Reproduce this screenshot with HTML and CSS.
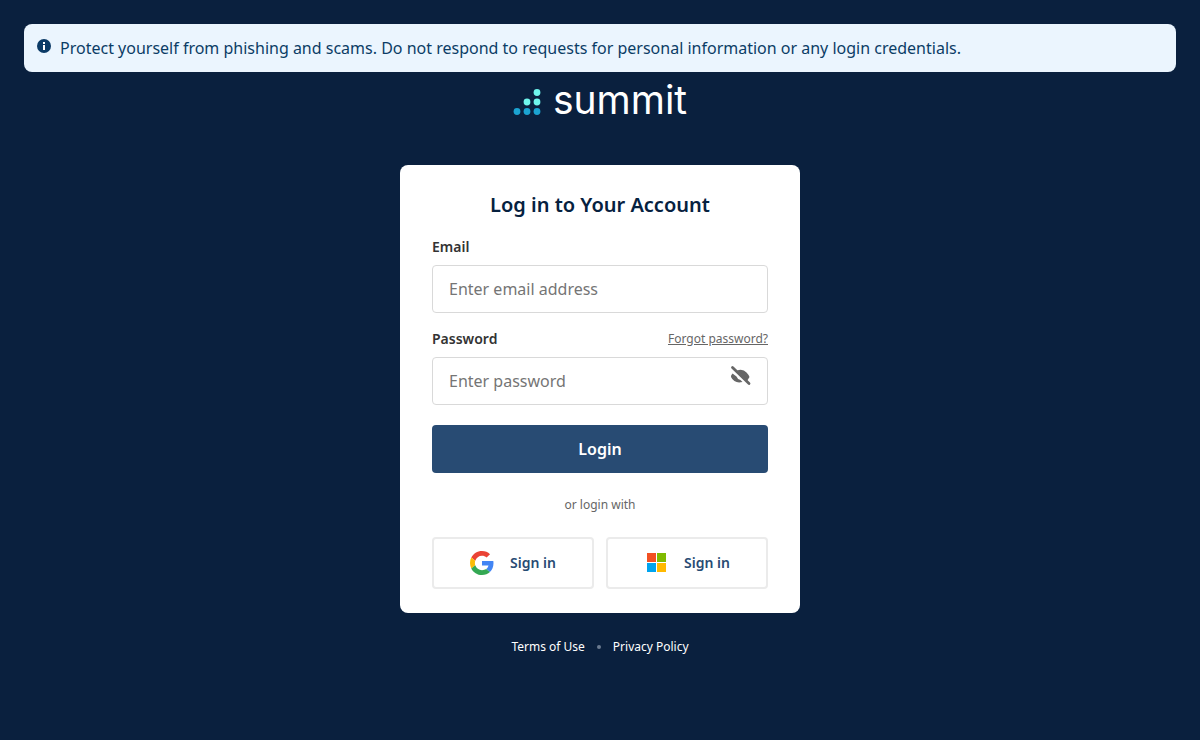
FILE: index.html
```html
<!DOCTYPE html>
<html lang="en">
<head>
<meta charset="utf-8">
<meta name="viewport" content="width=device-width, initial-scale=1">
<title>Summit – Log in</title>
<link rel="stylesheet" href="styles.css">
</head>
<body class="page">
  <div class="notice" role="status">
    <svg class="notice-icon" viewBox="0 0 14 14" aria-hidden="true">
      <circle cx="7" cy="7" r="7" fill="#0b3a66"/>
      <path d="M6 3h2v2H6zM6 6h2v5H6z" fill="#fff"/>
    </svg>
    <span>Protect yourself from phishing and scams. Do not respond to requests for personal information or any login credentials.</span>
  </div>

  <header class="brand">
    <svg class="brand-mark" viewBox="0 0 28 28" aria-hidden="true">
      <g fill="#1ba3d1"><circle cx="4" cy="23.500" r="3.400"/><circle cx="14" cy="23.500" r="3.400"/><circle cx="24" cy="23.500" r="3.400"/></g>
      <g fill="#6ff5ec"><circle cx="14" cy="14" r="3.400"/><circle cx="24" cy="14" r="3.400"/><circle cx="24" cy="4.500" r="3.400"/></g>
    </svg>
    <span class="brand-name">summit</span>
  </header>

  <main class="card">
    <h1 class="title">Log in to Your Account</h1>
    <form>
      <div class="field">
        <div class="label-row"><label for="email">Email</label></div>
        <input class="input" id="email" type="email" placeholder="Enter email address">
      </div>
      <div class="field">
        <div class="label-row">
          <label for="password">Password</label>
          <a class="forgot" href="#">Forgot password?</a>
        </div>
        <div class="password">
          <input class="input" id="password" type="password" placeholder="Enter password">
          <button class="toggle" type="button" aria-label="Show password">
            <svg viewBox="0 0 24 24" aria-hidden="true">
              <path d="M9 6.500Q15 4.500 18.500 8.500Q20.500 10.500 21.500 13L19 17ZM4.500 9.500Q2.500 11.500 3 13Q6.500 20 14.500 18L12.500 16Q9.500 15.500 8.500 12.500Z" fill="#666"/>
              <path d="M4.500 3.500L21 19.500" stroke="#666" stroke-width="2.800" stroke-linecap="round"/>
            </svg>
          </button>
        </div>
      </div>
      <button class="login" type="submit">Login</button>
    </form>
    <p class="divider">or login with</p>
    <div class="providers">
      <button class="provider" type="button" aria-label="Sign in with Google">
        <svg viewBox="0 0 48 48" aria-hidden="true">
          <path fill="#EA4335" d="M24 9.500c3.540 0 6.710 1.220 9.210 3.600l6.850-6.850C35.900 2.380 30.470 0 24 0 14.620 0 6.510 5.380 2.560 13.220l7.980 6.190C12.430 13.720 17.740 9.500 24 9.500z"/>
          <path fill="#4285F4" d="M46.980 24.550c0-1.570-.15-3.090-.38-4.550H24v9.020h12.940c-.58 2.960-2.260 5.480-4.780 7.180l7.730 6c4.510-4.180 7.090-10.360 7.090-17.650z"/>
          <path fill="#FBBC05" d="M10.530 28.590c-.48-1.450-.76-2.990-.76-4.590s.27-3.140.76-4.590l-7.980-6.190C.92 16.460 0 20.120 0 24c0 3.880.92 7.540 2.560 10.780l7.970-6.190z"/>
          <path fill="#34A853" d="M24 48c6.480 0 11.930-2.130 15.890-5.810l-7.730-6c-2.150 1.450-4.920 2.300-8.160 2.300-6.260 0-11.570-4.220-13.470-9.910l-7.980 6.190C6.510 42.620 14.620 48 24 48z"/>
        </svg>
        <span>Sign in</span>
      </button>
      <button class="provider" type="button" aria-label="Sign in with Microsoft">
        <svg viewBox="0 0 24 24" aria-hidden="true">
          <path fill="#F25022" d="M3 2h9v9H3z"/>
          <path fill="#7FBA00" d="M13 2h9v9h-9z"/>
          <path fill="#00A4EF" d="M3 12h9v9H3z"/>
          <path fill="#FFB900" d="M13 12h9v9h-9z"/>
        </svg>
        <span>Sign in</span>
      </button>
    </div>
  </main>

  <footer class="footer">
    <a href="#">Terms of Use</a>
    <span class="dot"></span>
    <a href="#">Privacy Policy</a>
  </footer>
</body>
</html>
```
FILE: styles.css
```css
* { box-sizing: border-box; }

.page {
  margin: 0;
  min-height: 100vh;
  padding: 24px;
  display: flex;
  flex-direction: column;
  align-items: center;
  background: #0a203e;
  font-family: "Noto Sans", "Open Sans", sans-serif;
}

.page button, .page input { font-family: inherit; }

.notice {
  align-self: stretch;
  display: flex;
  align-items: flex-start;
  gap: 9px;
  padding: 12px 13px;
  border-radius: 8px;
  background: #ebf5fe;
  color: #0b3d66;
  font-size: 16px;
  line-height: 24px;
}

.notice-icon { width: 14px; height: 14px; margin-top: 3px; flex: none; }

.brand {
  display: flex;
  align-items: center;
  gap: 12px;
  height: 56px;
  color: #fff;
}

.brand-mark { width: 28px; height: 28px; margin-top: 4px; }

.brand-name {
  font-family: Inter, Lato, sans-serif;
  font-size: 39px;
  line-height: 48px;
}

.card {
  width: 100%;
  max-width: 400px;
  margin-top: 37px;
  padding: 24px 32px;
  border-radius: 8px;
  background: #fff;
}

.title {
  margin: 0 0 16px;
  color: #06213f;
  font-size: 20px;
  font-weight: 600;
  line-height: 32px;
  text-align: center;
}

.field { margin-bottom: 16px; }

.label-row {
  display: flex;
  align-items: center;
  justify-content: space-between;
  margin-bottom: 8px;
  color: #333;
  font-size: 14px;
  font-weight: 600;
  line-height: 20px;
}

.forgot { color: #666; font-size: 12px; font-weight: 400; }

.input {
  display: block;
  width: 100%;
  height: 48px;
  padding: 0 16px;
  border: 1px solid #d9d9d9;
  border-radius: 4px;
  background: #fff;
  color: #333;
  font-size: 16px;
}

.input::placeholder { color: #757575; }

.password { position: relative; }

.toggle {
  position: absolute;
  top: 7px;
  right: 16px;
  width: 24px;
  height: 24px;
  padding: 0;
  border: 0;
  background: none;
}

.toggle svg { display: block; }

.login {
  display: block;
  width: 100%;
  height: 48px;
  margin-top: 20px;
  border: 0;
  border-radius: 4px;
  background: #284b73;
  color: #fff;
  font-size: 16px;
  font-weight: 600;
}

.divider {
  margin: 24px 0;
  color: #666;
  font-size: 12px;
  line-height: 16px;
  text-align: center;
}

.providers { display: grid; grid-template-columns: 1fr 1fr; gap: 12px; }

.provider {
  display: flex;
  align-items: center;
  justify-content: center;
  gap: 16px;
  height: 52px;
  padding: 0;
  border: 2px solid #ebebeb;
  border-radius: 4px;
  background: #fff;
  color: #284b73;
  font-size: 14px;
  font-weight: 600;
  line-height: 20px;
}

.provider svg { width: 24px; height: 24px; }

.footer {
  display: flex;
  align-items: center;
  gap: 12px;
  margin-top: 24px;
  font-size: 12px;
  font-weight: 400;
  line-height: 20px;
}

.footer a { color: #fff; text-decoration: none; }

.dot { width: 4px; height: 4px; border-radius: 50%; background: #6b7a90; }
```
